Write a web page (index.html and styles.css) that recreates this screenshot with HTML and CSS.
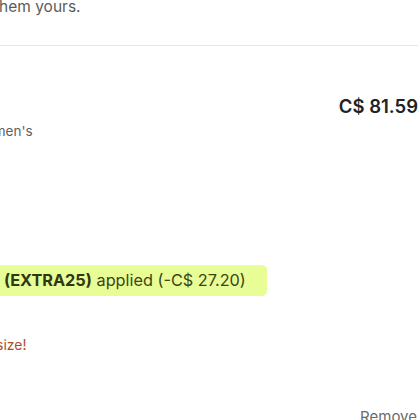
FILE: index.html
```html
<!DOCTYPE html>
<html lang="en">
<head>
<meta charset="utf-8">
<title>Cart item</title>
<link rel="stylesheet" href="styles.css">
</head>
<body>
<div class="page">
  <p class="intro">them yours.</p>
  <hr class="divider">
  <div class="item">
    <div class="item-head">
      <span class="price">C$ 81.59</span>
    </div>
    <p class="variant">Women's</p>
    <div class="promo"><strong>(EXTRA25)</strong> applied (-C$ 27.20)</div>
    <p class="warn">size!</p>
    <div class="actions"><a class="remove" href="#">Remove</a></div>
  </div>
</div>
</body>
</html>
```
FILE: styles.css
```css
html, body {
  margin: 0;
  padding: 0;
  background: #ffffff;
  overflow: hidden;
}
body {
  font-family: Inter, "Noto Sans", sans-serif;
  color: #222222;
  width: 420px;
  height: 420px;
}
.page {
  width: 418px;
}
.intro {
  margin: -4px 0 0 -6px;
  font-size: 15.5px;
  line-height: 22px;
  color: #5c5c5c;
}
.divider {
  margin: 27px 0 0;
  border: 0;
  border-top: 1px solid #e5e5e5;
  height: 0;
}
.item {
  padding-top: 48px;
}
.item-head {
  display: flex;
  justify-content: flex-end;
}
.price {
  font-size: 18.5px;
  line-height: 24px;
  font-weight: 600;
  color: #222222;
}
.variant {
  margin: 3px 0 0 -27px;
  font-size: 13.5px;
  line-height: 20px;
  color: #5f5f5f;
}
.promo {
  display: inline-block;
  margin: 124px 0 0 -20px;
  padding: 4px 21px 4px 24px;
  font-size: 16.3px;
  line-height: 23px;
  background: #e8fd96;
  color: #3a4514;
  border-radius: 5px;
}
.promo strong {
  font-weight: 700;
  color: #2f3810;
}
.warn {
  margin: 39px 0 0 -4px;
  font-size: 14px;
  line-height: 20px;
  color: #a9512a;
}
.actions {
  display: flex;
  justify-content: flex-end;
  margin-top: 52px;
  padding-right: 1px;
}
.remove {
  font-size: 15px;
  line-height: 20px;
  color: #6b6b6b;
  text-decoration: none;
}
```
